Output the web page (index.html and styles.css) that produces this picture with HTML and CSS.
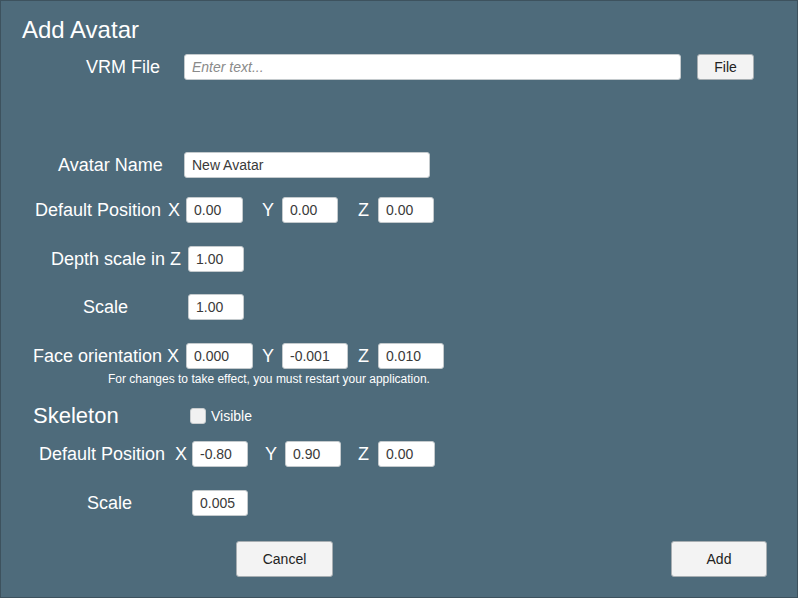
FILE: index.html
```html
<!DOCTYPE html>
<html lang="en">
<head>
  <meta charset="UTF-8">
  <title>Add Avatar</title>
  <link rel="stylesheet" href="styles.css">
</head>
<body>
  <div class="dialog">
    <h1>Add Avatar</h1>

    <div class="row row-vrm">
      <span class="label">VRM File</span>
      <input type="text" class="field field-wide" placeholder="Enter text...">
      <button class="btn btn-file">File</button>
    </div>

    <div class="row row-name">
      <span class="label">Avatar Name</span>
      <input type="text" class="field field-name" value="New Avatar">
    </div>

    <div class="row row-pos">
      <span class="label">Default Position</span>
      <span class="axis ax-x">X</span>
      <input type="text" class="field f57" value="0.00">
      <span class="axis ax-y">Y</span>
      <input type="text" class="field f56" value="0.00">
      <span class="axis ax-z">Z</span>
      <input type="text" class="field f56" value="0.00">
    </div>

    <div class="row row-depth">
      <span class="label">Depth scale in Z</span>
      <input type="text" class="field f56" value="1.00">
    </div>

    <div class="row row-scale">
      <span class="label">Scale</span>
      <input type="text" class="field f56" value="1.00">
    </div>

    <div class="row row-face">
      <span class="label">Face orientation</span>
      <span class="axis ax-x">X</span>
      <input type="text" class="field f67" value="0.000">
      <span class="axis ax-y">Y</span>
      <input type="text" class="field f66" value="-0.001">
      <span class="axis ax-z">Z</span>
      <input type="text" class="field f66" value="0.010">
    </div>
    <p class="note">For changes to take effect, you must restart your application.</p>

    <div class="row row-skel">
      <span class="label skel-title">Skeleton</span>
      <label class="check"><span class="box"></span>Visible</label>
    </div>

    <div class="row row-skpos">
      <span class="label">Default Position</span>
      <span class="axis ax-x">X</span>
      <input type="text" class="field f56" value="-0.80">
      <span class="axis ax-y">Y</span>
      <input type="text" class="field f56" value="0.90">
      <span class="axis ax-z">Z</span>
      <input type="text" class="field f57" value="0.00">
    </div>

    <div class="row row-skscale">
      <span class="label">Scale</span>
      <input type="text" class="field f56" value="0.005">
    </div>

    <div class="actions">
      <button class="btn btn-big">Cancel</button>
      <button class="btn btn-big btn-add">Add</button>
    </div>
  </div>
</body>
</html>
```

FILE: styles.css
```css
* {
  box-sizing: border-box;
}

body {
  margin: 0;
  padding: 0;
  font-family: "Liberation Sans", Arial, sans-serif;
  background-color: #4e6b7b;
}

.dialog {
  width: 798px;
  height: 598px;
  border: 1px solid #3d525e;
  background-color: #4e6b7b;
  padding-top: 15px;
  color: #fff;
}

h1 {
  margin: 0;
  padding-left: 21px;
  font-size: 24px;
  line-height: 28px;
  font-weight: normal;
}

.row {
  display: flex;
  align-items: center;
  height: 26px;
}

.label {
  flex-shrink: 0;
  font-size: 18px;
  white-space: nowrap;
}

.axis {
  flex-shrink: 0;
  font-size: 18px;
}

.field {
  height: 26px;
  padding: 0 0 0 7px;
  border: 1px solid #c4cacd;
  border-radius: 3px;
  background-color: #fff;
  font-family: "Liberation Sans", Arial, sans-serif;
  font-size: 14px;
  color: #3a3a3a;
  outline: none;
}

.field::placeholder {
  color: #8a8a8a;
  font-style: italic;
}

.f56 { width: 56px; }
.f57 { width: 57px; }
.f66 { width: 66px; }
.f67 { width: 67px; }

.btn {
  background-color: #f3f3f3;
  border: 1px solid #a7aeb2;
  border-radius: 3px;
  font-family: "Liberation Sans", Arial, sans-serif;
  font-size: 14px;
  color: #222;
  padding: 0;
  cursor: pointer;
}

/* VRM file */
.row-vrm {
  margin-top: 10px;
  padding-left: 85px;
}
.row-vrm .label { width: 98px; }
.field-wide { width: 497px; }
.btn-file {
  width: 57px;
  height: 26px;
  margin-left: 16px;
}

/* avatar name */
.row-name {
  margin-top: 72px;
  padding-left: 57px;
}
.row-name .label { width: 126px; }
.field-name { width: 246px; }

/* default position */
.row-pos {
  margin-top: 19px;
  padding-left: 34px;
}
.row-pos .label { width: 133px; }
.row-pos .ax-x { width: 18px; }
.row-pos .ax-y { width: 20px; margin-left: 19px; }
.row-pos .ax-z { width: 20px; margin-left: 20px; }

.row-depth {
  margin-top: 23px;
  padding-left: 50px;
}
.row-depth .label { width: 137px; }

.row-scale {
  margin-top: 22px;
  padding-left: 82px;
}
.row-scale .label { width: 105px; }

/* face orientation */
.row-face {
  margin-top: 23px;
  padding-left: 32px;
}
.row-face .label { width: 134px; }
.row-face .ax-x { width: 19px; }
.row-face .ax-y { width: 20px; margin-left: 9px; }
.row-face .ax-z { width: 20px; margin-left: 10px; }

.note {
  margin: 3px 0 0;
  padding-left: 107px;
  font-size: 12px;
  line-height: 14px;
}

/* skeleton */
.row-skel {
  margin-top: 17px;
  padding-left: 32px;
}
.skel-title {
  width: 157px;
  font-size: 22px;
}
.check {
  display: flex;
  align-items: center;
  font-size: 14px;
}
.box {
  width: 16px;
  height: 16px;
  margin-right: 5px;
  background-color: #f1f1f1;
  border: 1px solid #c9cdcf;
  border-radius: 3px;
}

.row-skpos {
  margin-top: 12px;
  padding-left: 38px;
}
.row-skpos .label { width: 136px; }
.row-skpos .ax-x { width: 17px; }
.row-skpos .ax-y { width: 20px; margin-left: 17px; }
.row-skpos .ax-z { width: 20px; margin-left: 17px; }

.row-skscale {
  margin-top: 23px;
  padding-left: 86px;
}
.row-skscale .label { width: 105px; }

/* buttons */
.actions {
  display: flex;
  margin-top: 25px;
  padding: 0 30px 0 235px;
}
.btn-big {
  width: 97px;
  height: 36px;
}
.btn-add {
  width: 96px;
  margin-left: auto;
}
```
